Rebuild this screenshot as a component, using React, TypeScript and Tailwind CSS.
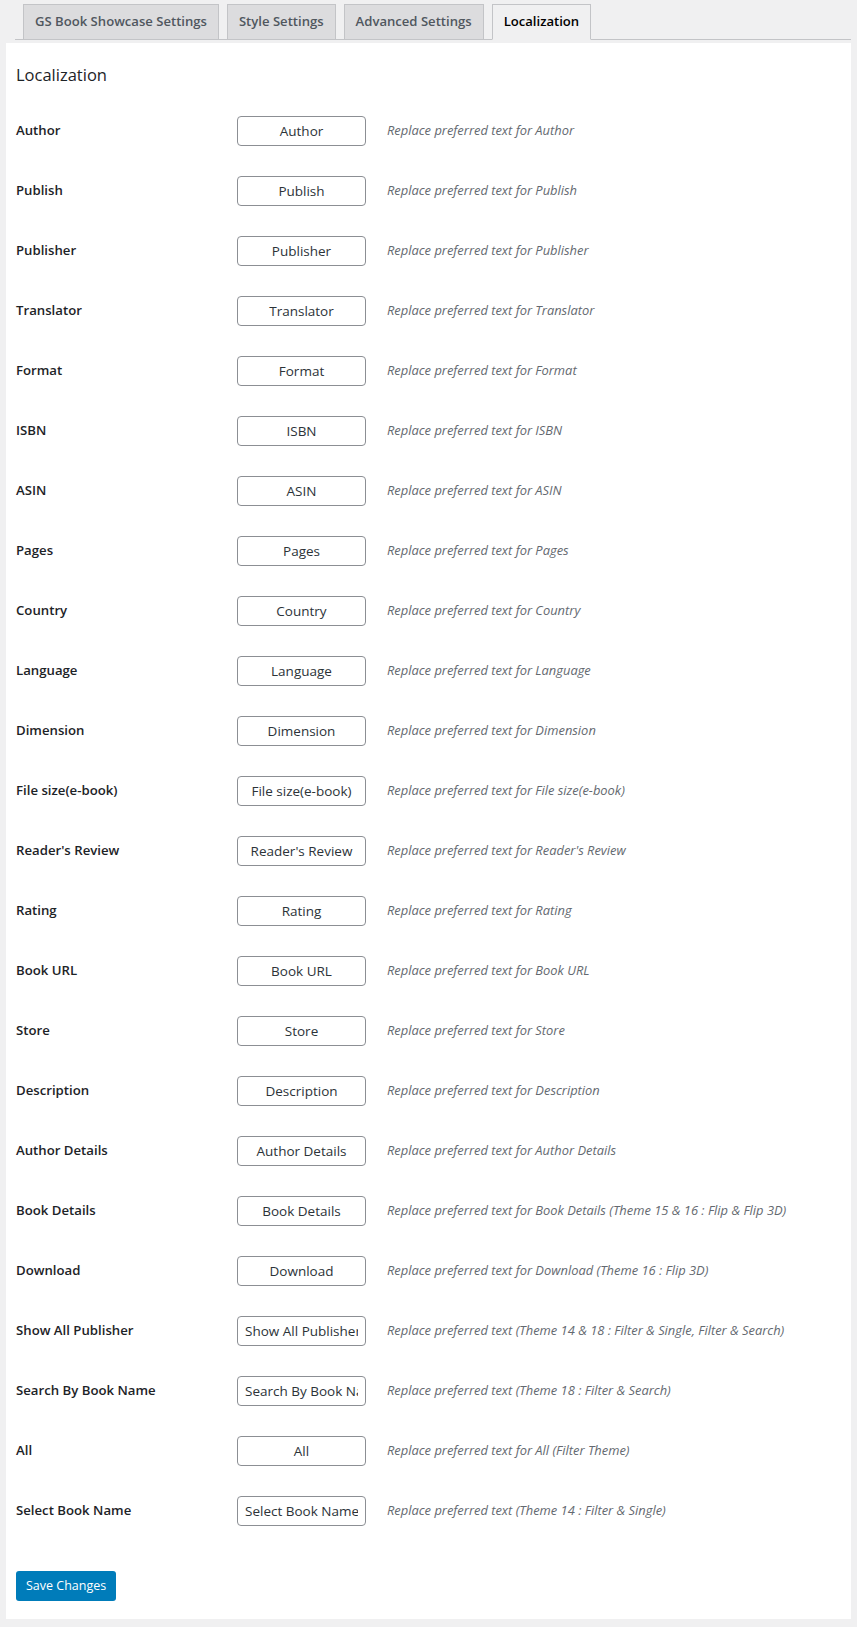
import { useState } from 'react'

const tabs = ['GS Book Showcase Settings', 'Style Settings', 'Advanced Settings', 'Localization']

const fields: { label: string; desc: string }[] = [
  { label: 'Author', desc: 'Replace preferred text for Author' },
  { label: 'Publish', desc: 'Replace preferred text for Publish' },
  { label: 'Publisher', desc: 'Replace preferred text for Publisher' },
  { label: 'Translator', desc: 'Replace preferred text for Translator' },
  { label: 'Format', desc: 'Replace preferred text for Format' },
  { label: 'ISBN', desc: 'Replace preferred text for ISBN' },
  { label: 'ASIN', desc: 'Replace preferred text for ASIN' },
  { label: 'Pages', desc: 'Replace preferred text for Pages' },
  { label: 'Country', desc: 'Replace preferred text for Country' },
  { label: 'Language', desc: 'Replace preferred text for Language' },
  { label: 'Dimension', desc: 'Replace preferred text for Dimension' },
  { label: 'File size(e-book)', desc: 'Replace preferred text for File size(e-book)' },
  { label: "Reader's Review", desc: "Replace preferred text for Reader's Review" },
  { label: 'Rating', desc: 'Replace preferred text for Rating' },
  { label: 'Book URL', desc: 'Replace preferred text for Book URL' },
  { label: 'Store', desc: 'Replace preferred text for Store' },
  { label: 'Description', desc: 'Replace preferred text for Description' },
  { label: 'Author Details', desc: 'Replace preferred text for Author Details' },
  { label: 'Book Details', desc: 'Replace preferred text for Book Details (Theme 15 & 16 : Flip & Flip 3D)' },
  { label: 'Download', desc: 'Replace preferred text for Download (Theme 16 : Flip 3D)' },
  { label: 'Show All Publisher', desc: 'Replace preferred text (Theme 14 & 18 : Filter & Single, Filter & Search)' },
  { label: 'Search By Book Name', desc: 'Replace preferred text (Theme 18 : Filter & Search)' },
  { label: 'All', desc: 'Replace preferred text for All (Filter Theme)' },
  { label: 'Select Book Name', desc: 'Replace preferred text (Theme 14 : Filter & Single)' },
]

export default function App() {
  const [active, setActive] = useState(3)

  return (
    <div className="min-h-[1627px] bg-[#f0f0f1] pt-[4px] font-['Open_Sans',sans-serif] text-[#1d2327]">
      {/* Tabs */}
      <div className="ml-[15px] mr-[6px] flex items-end border-b border-[#c3c4c7] pl-[8px]">
        {tabs.map((t, i) => (
          <button
            key={t}
            onClick={() => setActive(i)}
            className={`-mb-px mr-[8px] h-[36px] border border-[#c3c4c7] px-[11px] text-[13.1px] font-semibold ${
              i === active ? 'border-b-[#f0f0f1] bg-[#f0f0f1] text-black' : 'bg-[#dcdcde] text-[#50575e]'
            }`}
          >
            {t}
          </button>
        ))}
      </div>

      {/* Panel */}
      <div className="mx-[6px] mt-[3px] bg-white px-[10px] pb-[18px] pt-[21px]">
        <h2 className="text-[16.5px] leading-[22px] font-medium text-[#1d2327]">Localization</h2>

        <div className="mt-[15px] flex flex-col">
          {fields.map((f) => (
            <div key={f.label} className="flex h-[60px] items-center">
              <div className="w-[221px] text-[13.2px] font-semibold">{f.label}</div>
              <input
                type="text"
                defaultValue={f.label}
                className="h-[30px] w-[129px] rounded-[4px] border border-[#8c8f94] bg-white px-[7px] text-center text-[13.5px] text-[#2c3338] outline-none"
              />
              <span className="ml-[21px] text-[12.9px] italic text-[#646970]">{f.desc}</span>
            </div>
          ))}
        </div>

        <button className="mt-[30px] h-[30px] rounded-[3px] bg-[#007cba] px-[10px] text-[12.5px] text-white">
          Save Changes
        </button>
      </div>
    </div>
  )
}
